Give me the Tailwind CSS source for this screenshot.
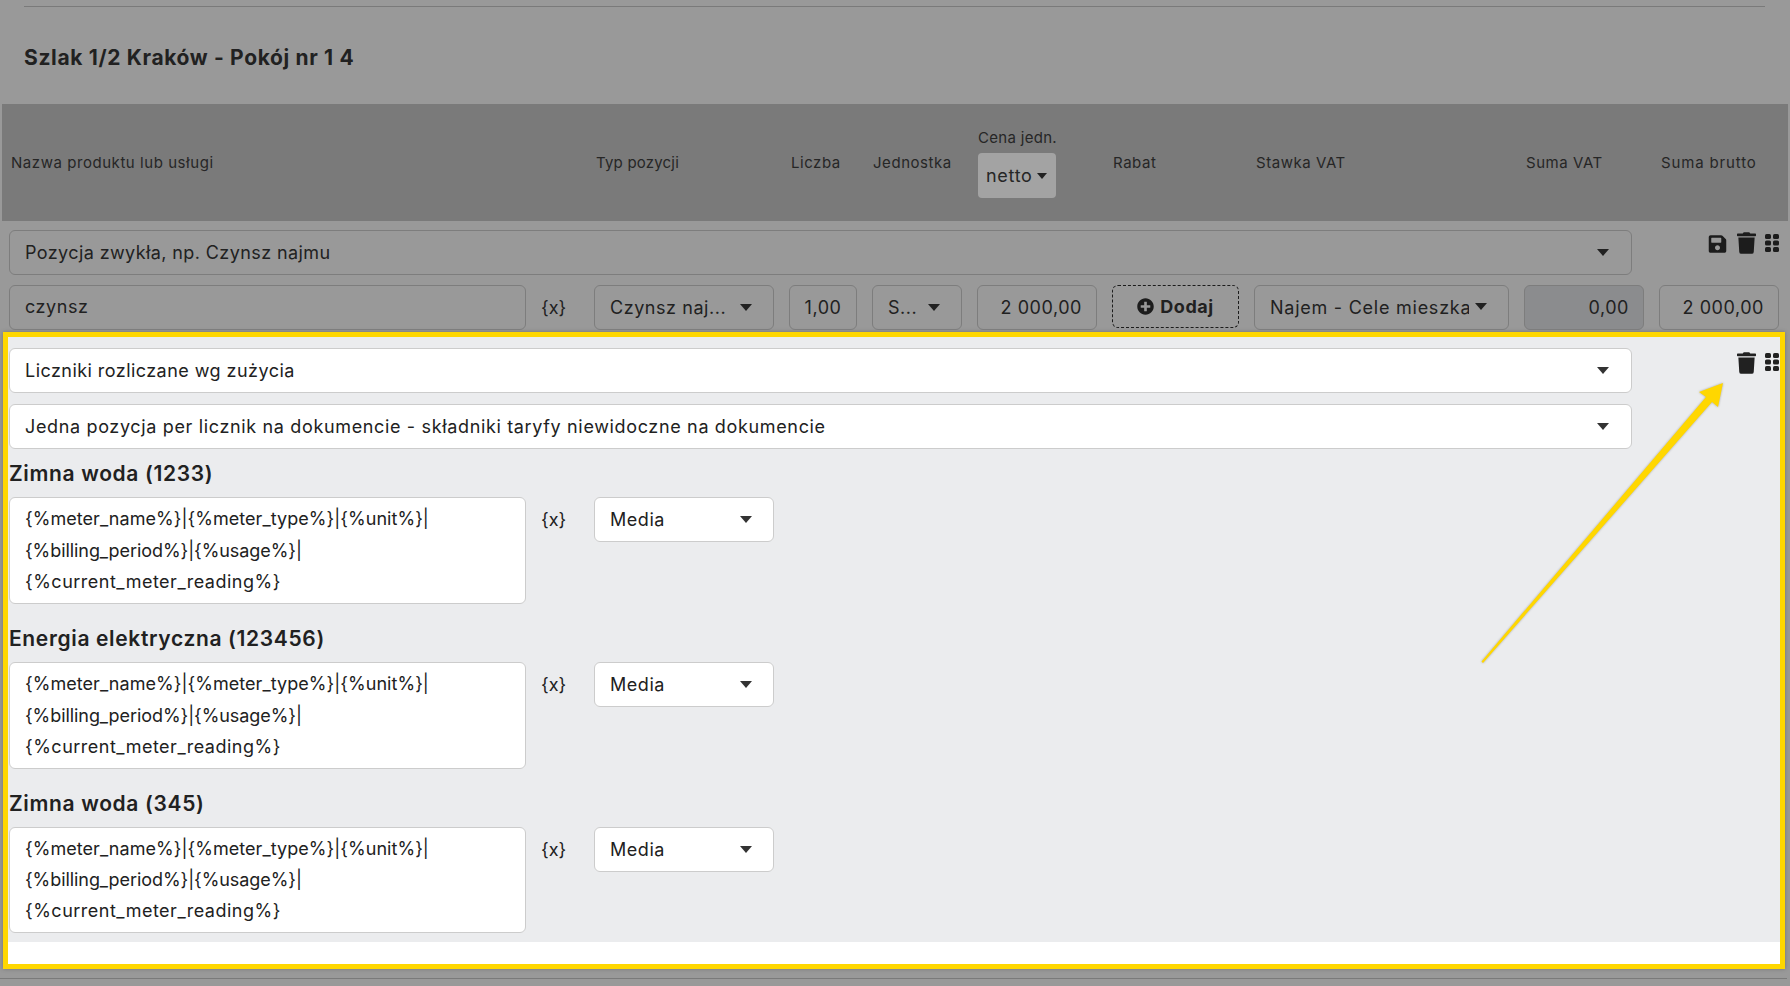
<!DOCTYPE html>
<html lang="pl">
<head>
    <meta charset="utf-8">
    <title>Szlak 1/2 Kraków - Pokój nr 1 4</title>
    <script src="https://cdn.jsdelivr.net/npm/@tailwindcss/browser@4"></script>
</head>
<body class="relative h-[986px] overflow-hidden bg-[#999999] font-['Inter','Noto_Sans',sans-serif] text-[#212121]">

    <div class="pt-[6px] px-[24px]">
        <div class="h-px w-[1741px] bg-[#7a7a7a]"></div>
    </div>
    <h2 class="h-[97px] pl-[24px] pt-[38px] text-[21px] leading-[26px] font-bold tracking-[0.65px]">Szlak 1/2 Kraków - Pokój nr 1 4</h2>

    <!-- table head -->
    <div class="ml-[2px] flex h-[117px] w-[1786px] items-center gap-[15px] bg-[#7a7a7a] pl-[7px] text-[15px] tracking-[0.55px] text-[#262626]">
        <div class="mt-[2px] w-[517px] pl-[2px]">Nazwa produktu lub usługi</div>
        <div class="w-[38px]"></div>
        <div class="mt-[2px] w-[180px] pl-[2px] tracking-[0.2px]">Typ pozycji</div>
        <div class="mt-[2px] w-[68px] pl-[2px]">Liczba</div>
        <div class="mt-[2px] w-[90px] pl-[1px]">Jednostka</div>
        <div class="w-[120px] self-start pt-[23px] pl-[1px]">
            <div class="mb-[4px] leading-[22px] tracking-[0.3px]">Cena jedn.</div>
            <div class="flex h-[45px] w-[78px] items-center gap-[4px] rounded-[4px] bg-[#a3a3a3] pl-[8px] text-[18px] tracking-[0.7px]">
                netto
                <svg class="h-[6px] w-[10px]" viewBox="0 0 10 6"><polygon points="0,0 10,0 5,6" fill="#212121"/></svg>
            </div>
        </div>
        <div class="mt-[2px] w-[127px] pl-[1px]">Rabat</div>
        <div class="mt-[2px] w-[255px] pl-[2px]">Stawka VAT</div>
        <div class="mt-[2px] w-[120px] pl-[2px]">Suma VAT</div>
        <div class="mt-[2px] w-[120px] pl-[2px] tracking-[0.85px]">Suma brutto</div>
    </div>

    <!-- regular item -->
    <div class="mt-[9px] flex h-[45px] pl-[9px]">
        <div class="flex w-[1623px] items-center justify-between rounded-[6px] border border-[#7d7d7d] pr-[22px] pl-[15px] text-[18px] tracking-[0.4px]">
            Pozycja zwykła, np. Czynsz najmu
            <svg class="h-[7px] w-[12px]" viewBox="0 0 12 7"><polygon points="0,0 12,0 6,7" fill="#212121"/></svg>
        </div>
        <div class="ml-[76px] flex gap-[10px] pt-[4px]">
            <svg class="h-[20px] w-[19px] fill-[#1c1c1c]" viewBox="0 0 448 512"><path d="M433.941 129.941l-83.882-83.882A48 48 0 0 0 316.118 32H48C21.49 32 0 53.49 0 80v352c0 26.51 21.49 48 48 48h352c26.51 0 48-21.49 48-48V163.882a48 48 0 0 0-14.059-33.941zM224 416c-35.346 0-64-28.654-64-64 0-35.346 28.654-64 64-64s64 28.654 64 64c0 35.346-28.654 64-64 64zm96-304.52V212c0 6.627-5.373 12-12 12H76c-6.627 0-12-5.373-12-12V108c0-6.627 5.373-12 12-12h228.52c3.183 0 6.235 1.264 8.485 3.515l3.48 3.48A11.996 11.996 0 0 1 320 111.48z"/></svg>
            <svg class="-mt-[2px] h-[22px] w-[19px] fill-[#1c1c1c]" viewBox="0 0 448 512"><path d="M432 32H312l-9.4-18.7A24 24 0 0 0 281.1 0H166.8a23.72 23.72 0 0 0-21.4 13.3L136 32H16A16 16 0 0 0 0 48v32a16 16 0 0 0 16 16h416a16 16 0 0 0 16-16V48a16 16 0 0 0-16-16zM53.2 467a48 48 0 0 0 47.9 45h245.8a48 48 0 0 0 47.9-45L416 128H32z"/></svg>
            <svg class="-ml-[1px] h-[18px] w-[14px] fill-[#1c1c1c]" viewBox="0 0 14 18"><rect width="6" height="5" rx="1.6"/><rect x="8" width="6" height="5" rx="1.6"/><rect y="6.5" width="6" height="5" rx="1.6"/><rect x="8" y="6.5" width="6" height="5" rx="1.6"/><rect y="13" width="6" height="5" rx="1.6"/><rect x="8" y="13" width="6" height="5" rx="1.6"/></svg>
        </div>
    </div>

    <div class="mt-[10px] flex h-[45px] gap-[15px] pl-[9px] text-[18px] tracking-[0.55px]">
        <div class="flex w-[517px] items-center rounded-[6px] border border-[#7d7d7d] pb-[2px] pl-[15px]">czynsz</div>
        <div class="flex w-[38px] items-center tracking-normal">{x}</div>
        <div class="flex w-[180px] items-center justify-between rounded-[6px] border border-[#7d7d7d] pr-[21px] pl-[15px]">
            Czynsz naj...
            <svg class="h-[7px] w-[12px]" viewBox="0 0 12 7"><polygon points="0,0 12,0 6,7" fill="#212121"/></svg>
        </div>
        <div class="flex w-[68px] items-center justify-center rounded-[6px] border border-[#7d7d7d]">1,00</div>
        <div class="flex w-[90px] items-center justify-between rounded-[6px] border border-[#7d7d7d] pr-[21px] pl-[15px]">
            S...
            <svg class="h-[7px] w-[12px]" viewBox="0 0 12 7"><polygon points="0,0 12,0 6,7" fill="#212121"/></svg>
        </div>
        <div class="flex w-[120px] items-center justify-end rounded-[6px] border border-[#7d7d7d] pr-[14px]">2 000,00</div>
        <div class="flex h-[43px] w-[127px] items-center justify-center gap-[6px] rounded-[6px] border border-dashed border-[#1c1c1c] font-bold">
            <svg class="h-[17px] w-[17px] fill-[#1c1c1c]" viewBox="0 0 512 512"><path d="M256 8C119 8 8 119 8 256s111 248 248 248 248-111 248-248S393 8 256 8zm144 276c0 6.6-5.4 12-12 12h-92v92c0 6.6-5.4 12-12 12h-56c-6.6 0-12-5.4-12-12v-92h-92c-6.6 0-12-5.4-12-12v-56c0-6.6 5.4-12 12-12h92v-92c0-6.6 5.4-12 12-12h56c6.6 0 12 5.4 12 12v92h92c6.6 0 12 5.4 12 12v56z"/></svg>
            Dodaj
        </div>
        <div class="relative flex w-[255px] items-center rounded-[6px] border border-[#7d7d7d] pl-[15px] tracking-[0.75px]">
            <span class="w-[199px] overflow-hidden whitespace-nowrap">Najem - Cele mieszkalne</span>
            <svg class="absolute top-[17px] right-[21px] h-[7px] w-[12px]" viewBox="0 0 12 7"><polygon points="0,0 12,0 6,7" fill="#212121"/></svg>
        </div>
        <div class="flex w-[120px] items-center justify-end rounded-[6px] border border-[#7d7d7d] bg-[#8b8c8e] pr-[14px]">0,00</div>
        <div class="flex w-[120px] items-center justify-end rounded-[6px] border border-[#7d7d7d] pr-[14px]">2 000,00</div>
    </div>

    <!-- highlighted item -->
    <div class="mt-[2px] ml-[3px] h-[637px] w-[1782px] border-[5px] border-[#ffd700] bg-white shadow-[0_0_4px_rgba(0,0,0,0.25)]">
        <div class="h-[605px] bg-[#ebecee] pt-[11px] pl-[1px] text-[18px] tracking-[0.55px]">
            <div class="flex h-[45px]">
                <div class="flex w-[1623px] items-center justify-between rounded-[6px] border border-[#cccccc] bg-white pr-[22px] pl-[15px] tracking-[0.45px]">
                    Liczniki rozliczane wg zużycia
                    <svg class="h-[7px] w-[12px]" viewBox="0 0 12 7"><polygon points="0,0 12,0 6,7" fill="#333333"/></svg>
                </div>
                <div class="ml-[105px] flex gap-[10px] pt-[4px]">
                    <svg class="h-[22px] w-[19px] fill-[#212121]" viewBox="0 0 448 512"><path d="M432 32H312l-9.4-18.7A24 24 0 0 0 281.1 0H166.8a23.72 23.72 0 0 0-21.4 13.3L136 32H16A16 16 0 0 0 0 48v32a16 16 0 0 0 16 16h416a16 16 0 0 0 16-16V48a16 16 0 0 0-16-16zM53.2 467a48 48 0 0 0 47.9 45h245.8a48 48 0 0 0 47.9-45L416 128H32z"/></svg>
                    <svg class="mt-[1px] -ml-[1px] h-[18px] w-[14px] fill-[#212121]" viewBox="0 0 14 18"><rect width="6" height="5" rx="1.6"/><rect x="8" width="6" height="5" rx="1.6"/><rect y="6.5" width="6" height="5" rx="1.6"/><rect x="8" y="6.5" width="6" height="5" rx="1.6"/><rect y="13" width="6" height="5" rx="1.6"/><rect x="8" y="13" width="6" height="5" rx="1.6"/></svg>
                </div>
            </div>
            <div class="mt-[11px] flex h-[45px] w-[1623px] items-center justify-between rounded-[6px] border border-[#cccccc] bg-white pr-[22px] pl-[15px] tracking-[0.65px]">
                Jedna pozycja per licznik na dokumencie - składniki taryfy niewidoczne na dokumencie
                <svg class="h-[7px] w-[12px]" viewBox="0 0 12 7"><polygon points="0,0 12,0 6,7" fill="#333333"/></svg>
            </div>

            <h3 class="mt-[9px] h-[39px] pt-[2px] text-[21px] leading-[28px] font-semibold tracking-[0.65px]">Zimna woda (1233)</h3>
            <div class="flex gap-[15px]">
                <div class="h-[107px] w-[517px] rounded-[6px] border border-[#cccccc] bg-white px-[15px] pt-[5px] leading-[31.5px]">
                    <div class="tracking-[0.05px]">{%meter_name%}|{%meter_type%}|{%unit%}|</div>
                    <div class="tracking-[-0.07px]">{%billing_period%}|{%usage%}|</div>
                    <div class="tracking-[0.5px]">{%current_meter_reading%}</div>
                </div>
                <div class="flex h-[45px] w-[38px] items-center tracking-normal">{x}</div>
                <div class="flex h-[45px] w-[180px] items-center justify-between rounded-[6px] border border-[#cccccc] bg-white pr-[21px] pl-[15px]">
                    Media
                    <svg class="h-[7px] w-[12px]" viewBox="0 0 12 7"><polygon points="0,0 12,0 6,7" fill="#333333"/></svg>
                </div>
            </div>

            <h3 class="mt-[19px] h-[39px] pt-[2px] text-[21px] leading-[28px] font-semibold tracking-[0.65px]">Energia elektryczna (123456)</h3>
            <div class="flex gap-[15px]">
                <div class="h-[107px] w-[517px] rounded-[6px] border border-[#cccccc] bg-white px-[15px] pt-[5px] leading-[31.5px]">
                    <div class="tracking-[0.05px]">{%meter_name%}|{%meter_type%}|{%unit%}|</div>
                    <div class="tracking-[-0.07px]">{%billing_period%}|{%usage%}|</div>
                    <div class="tracking-[0.5px]">{%current_meter_reading%}</div>
                </div>
                <div class="flex h-[45px] w-[38px] items-center tracking-normal">{x}</div>
                <div class="flex h-[45px] w-[180px] items-center justify-between rounded-[6px] border border-[#cccccc] bg-white pr-[21px] pl-[15px]">
                    Media
                    <svg class="h-[7px] w-[12px]" viewBox="0 0 12 7"><polygon points="0,0 12,0 6,7" fill="#333333"/></svg>
                </div>
            </div>

            <h3 class="mt-[19px] h-[39px] pt-[2px] text-[21px] leading-[28px] font-semibold tracking-[0.65px]">Zimna woda (345)</h3>
            <div class="flex gap-[15px]">
                <div class="h-[106px] w-[517px] rounded-[6px] border border-[#cccccc] bg-white px-[15px] pt-[5px] leading-[31px]">
                    <div class="tracking-[0.05px]">{%meter_name%}|{%meter_type%}|{%unit%}|</div>
                    <div class="tracking-[-0.07px]">{%billing_period%}|{%usage%}|</div>
                    <div class="tracking-[0.5px]">{%current_meter_reading%}</div>
                </div>
                <div class="flex h-[45px] w-[38px] items-center tracking-normal">{x}</div>
                <div class="flex h-[45px] w-[180px] items-center justify-between rounded-[6px] border border-[#cccccc] bg-white pr-[21px] pl-[15px]">
                    Media
                    <svg class="h-[7px] w-[12px]" viewBox="0 0 12 7"><polygon points="0,0 12,0 6,7" fill="#333333"/></svg>
                </div>
            </div>
        </div>
    </div>

    <div class="mt-[9px] h-px w-[1787px] bg-[#7a7a7a]"></div>

    <!-- arrow drawn on top of the screenshot -->
    <svg class="absolute top-0 left-0 h-[986px] w-[1790px] drop-shadow-[0_0_1px_rgba(0,0,0,0.3)]" viewBox="0 0 1790 986" fill="none">
        <polygon points="1481.5,661.5 1706,397 1699,392 1723,383 1718,407 1712,402 1483,663" fill="#ffd700"/>
    </svg>
</body>
</html>
